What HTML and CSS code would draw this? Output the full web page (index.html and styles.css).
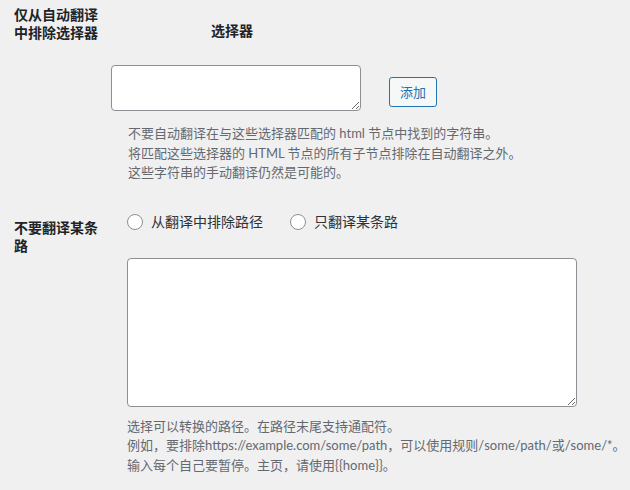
FILE: index.html
```html
<!DOCTYPE html>
<html lang="zh-CN">
<head>
<meta charset="utf-8">
<title>设置</title>
<link rel="stylesheet" href="styles.css">
</head>
<body>
<div class="form">
  <div class="row row-selectors">
    <div class="label">仅从自动翻译中排除选择器</div>
    <div class="field">
      <div class="selector-table">
        <div class="col-head">选择器</div>
        <div class="selector-row">
          <textarea class="ta-small"></textarea>
          <button class="button" type="button">添加</button>
        </div>
      </div>
      <p class="description">不要自动翻译在与这些选择器匹配的 html 节点中找到的字符串。<br>将匹配这些选择器的 HTML 节点的所有子节点排除在自动翻译之外。<br>这些字符串的手动翻译仍然是可能的。</p>
    </div>
  </div>
  <div class="row row-paths">
    <div class="label">不要翻译某条路</div>
    <div class="field">
      <div class="radios">
        <label class="radio"><input type="radio" name="mode"><span>从翻译中排除路径</span></label>
        <label class="radio"><input type="radio" name="mode"><span>只翻译某条路</span></label>
      </div>
      <textarea class="ta-large"></textarea>
      <p class="description">选择可以转换的路径。在路径末尾支持通配符。<br>例如，要排除https://example.com/some/path，可以使用规则/some/path/或/some/*。<br>输入每个自己要暂停。主页，请使用{{home}}。</p>
    </div>
  </div>
</div>
</body>
</html>
```
FILE: styles.css
```css
html, body {
  margin: 0;
  padding: 0;
  background: #f0f0f1;
}
body {
  font-family: Lato, "Noto Sans CJK SC", sans-serif;
  color: #1d2327;
  font-size: 14px;
}
.form {
  padding-left: 14px;
}
.row {
  display: grid;
  grid-template-columns: 90px 1fr;
  column-gap: 23px;
}
.row-selectors {
  padding-top: 6px;
}
.row-paths {
  padding-top: 29px;
}
.label {
  font-weight: 700;
  font-size: 14px;
  line-height: 18px;
}
.row-paths .label {
  padding-top: 7px;
}
.selector-table {
  margin-left: -16px;
}
.col-head {
  width: 242px;
  padding-right: 8px;
  text-align: center;
  font-weight: 700;
  line-height: 18px;
  margin-top: 16px;
}
.selector-row {
  display: flex;
  align-items: flex-start;
  margin-top: 25px;
  gap: 28px;
}
textarea {
  display: block;
  box-sizing: border-box;
  margin: 0;
  border: 1px solid #8c8f94;
  border-radius: 4px;
  background: #fff;
  font-family: inherit;
  font-size: 14px;
}
.ta-small {
  width: 250px;
  height: 46px;
}
.ta-large {
  width: 450px;
  height: 149px;
  margin-top: 26px;
}
.button {
  margin-top: 12px;
  box-sizing: border-box;
  height: 30px;
  padding: 0 10px;
  border: 1px solid #2271b1;
  border-radius: 3px;
  background: #f6f7f7;
  color: #2271b1;
  font-family: inherit;
  font-size: 13px;
  line-height: 28px;
  cursor: pointer;
}
.description {
  margin: 13px 0 0 1px;
  font-size: 13px;
  line-height: 19.5px;
  color: #646970;
  white-space: nowrap;
}
.row-paths .description {
  margin: 10px 0 0 0;
}
.radios {
  display: flex;
  align-items: center;
  height: 20px;
  gap: 27px;
}
.radio {
  display: flex;
  align-items: center;
  gap: 8px;
  font-size: 14px;
  line-height: 20px;
  color: #2c3338;
}
.radio input {
  appearance: none;
  -webkit-appearance: none;
  margin: 0;
  width: 16px;
  height: 16px;
  box-sizing: border-box;
  border: 1px solid #8c8f94;
  border-radius: 50%;
  background: #fff;
}
```
